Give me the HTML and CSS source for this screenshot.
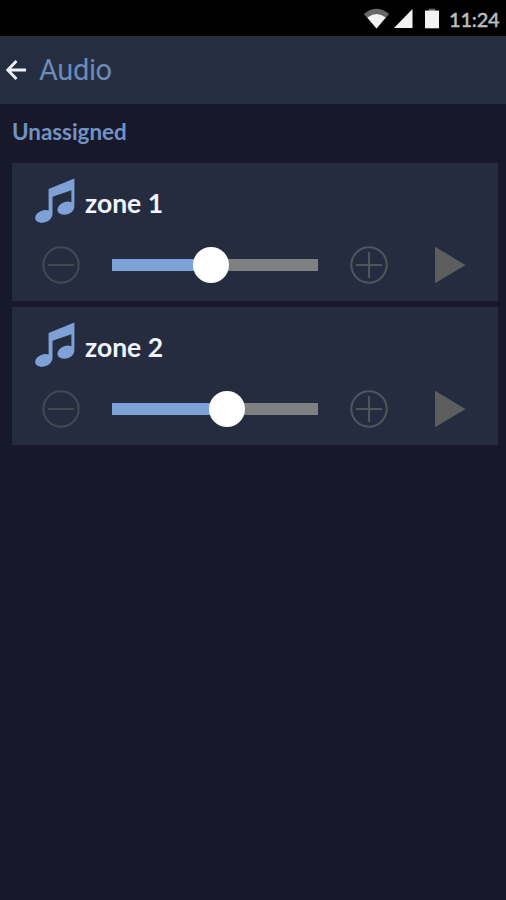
FILE: index.html
```html
<!DOCTYPE html>
<html lang="en">
<head>
<meta charset="utf-8">
<title>Audio</title>
<link rel="stylesheet" href="styles.css">
</head>
<body>
<svg class="defs" width="0" height="0" aria-hidden="true">
  <symbol id="note" viewBox="0 0 40 46"><path d="M13.600 11 39.400.4V28c0 5-5 9-10.300 8.700-4.200-.2-6.600-2.200-6.600-5 0-4.300 5.500-8.300 10.500-8.300 1.300 0 2.500.3 3.400.9V12.300L17.500 18.800V35.500c0 5.500-5.300 9.400-10.600 9.300C2.800 44.700.2 42.600.2 40c0-4.300 5.300-8 10.300-8 1.100 0 2.200.2 3.100.6Z"/></symbol>
  <symbol id="minus" viewBox="0 0 38 38"><circle cx="19" cy="19" r="17.700"/><path d="M6 19H32"/></symbol>
  <symbol id="plus" viewBox="0 0 38 38"><circle cx="19" cy="19" r="17.700"/><path d="M6 19H32M19 6V32"/></symbol>
  <symbol id="play" viewBox="0 0 32 38"><path d="M1 .8 31.500 19 1 37.200Z"/></symbol>
</svg>
<div class="status">
  <svg class="wifi" viewBox="0 0 28 22"><path class="dim" d="M.8 6.200Q14-4.700 27.200 6.200L14 21.500Z"/><path d="M4.300 10Q14 2.500 23.700 10L14 21.500Z"/></svg>
  <svg class="signal" viewBox="0 0 20 20"><path d="M0 20 19.500 0V20Z"/></svg>
  <svg class="battery" viewBox="0 0 15 21"><path class="dim" d="M4 0H11V3H4Z"/><path d="M0 2H15V21H0Z"/></svg>
  <span class="time">11:24</span>
</div>
<header class="header">
  <svg class="back" viewBox="0 0 22 22"><path d="M21 11H2.500M11 1.500 1.800 11 11 20.500"/></svg>
  <h1 class="title">Audio</h1>
</header>
<main class="main">
  <h2 class="group">Unassigned</h2>
  <section class="card">
    <div class="name"><svg class="note"><use href="#note"/></svg><span>zone 1</span></div>
    <div class="controls">
      <svg class="round less"><use href="#minus"/></svg>
      <div class="slider"><div class="fill" style="width:98.500px"></div><div class="thumb"></div></div>
      <svg class="round"><use href="#plus"/></svg>
      <svg class="play"><use href="#play"/></svg>
    </div>
  </section>
  <section class="card">
    <div class="name"><svg class="note"><use href="#note"/></svg><span>zone 2</span></div>
    <div class="controls">
      <svg class="round less"><use href="#minus"/></svg>
      <div class="slider"><div class="fill" style="width:115px"></div><div class="thumb"></div></div>
      <svg class="round"><use href="#plus"/></svg>
      <svg class="play"><use href="#play"/></svg>
    </div>
  </section>
</main>
</body>
</html>
```
FILE: styles.css
```css
* { box-sizing: border-box; }
body { margin: 0; height: 900px; overflow: hidden; background: #17192b; font-family: Lato, sans-serif; }
svg { display: block; flex: none; }
.defs { position: absolute; }
.status { height: 36px; display: flex; align-items: flex-start; background: #000; padding: 8px 7px 0 363px; fill: #f2f2f2; }
.status .dim { fill: #686868; }
.wifi { width: 27px; height: 21px; }
.signal { width: 19px; height: 19px; margin: 1px 0 0 4px; }
.battery { width: 14px; height: 21px; margin-left: 12px; }
.time { margin: -1px 0 0 10px; font: 500 20px/24px Lato, sans-serif; letter-spacing: -.2px; color: #bcbcbc; white-space: nowrap; -webkit-text-stroke: .4px #bcbcbc; }
.header { height: 68px; display: flex; align-items: center; padding-left: 6px; background: #252d40; }
.back { width: 21px; height: 22px; fill: none; stroke: #eef1f8; stroke-width: 3; }
.title { margin: 0 0 0 12px; font: 400 29px/36px Roboto, sans-serif; letter-spacing: -.4px; color: #6c8bb8; }
.main { padding: 0 8px 0 12px; }
.group { margin: 0; height: 59px; padding-top: 14px; font-size: 22.400px; line-height: 27px; font-weight: 700; color: #7392c4; }
.card { height: 138px; margin-bottom: 6px; background: #262c40; }
.name { display: flex; align-items: center; height: 80px; padding-left: 23px; color: #f1f4fb; font-size: 26.500px; font-weight: 700; }
.note { width: 40px; height: 46px; margin: -4px 10px 0 0; fill: #7ea2d7; }
.controls { display: flex; align-items: center; height: 44px; padding-left: 30px; }
.round { width: 38px; height: 38px; fill: none; stroke: #50545d; stroke-width: 2; }
.less { stroke: #434852; }
.slider { display: flex; align-items: center; width: 206px; height: 12px; margin: 0 32px; background: #7f8081; }
.fill { height: 12px; background: #7da2d5; }
.thumb { flex: none; width: 36px; height: 36px; margin-left: -18px; border-radius: 50%; background: #fff; }
.play { width: 32px; height: 38px; margin-left: 46px; fill: #5c5e5e; }
```
